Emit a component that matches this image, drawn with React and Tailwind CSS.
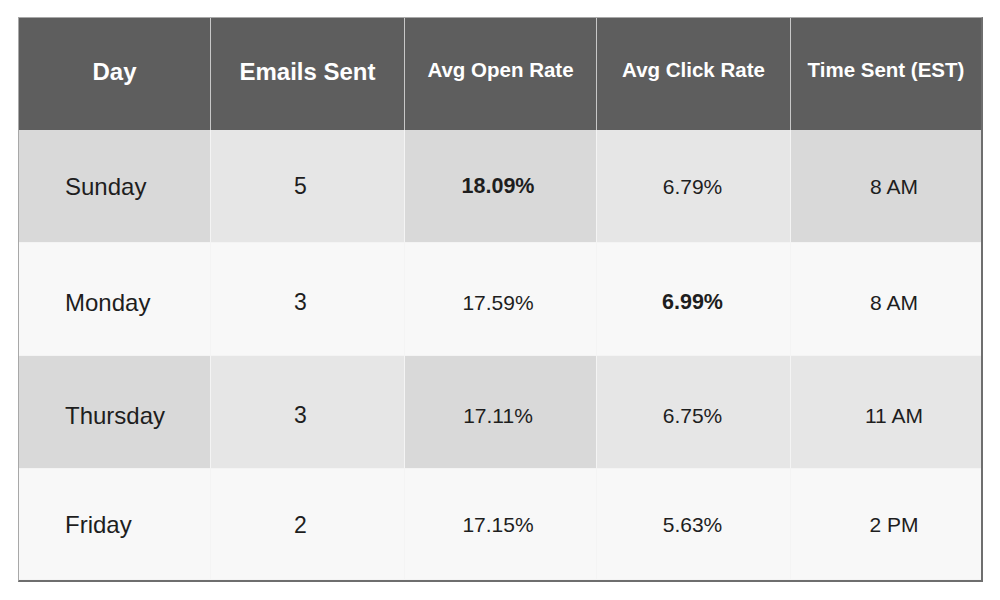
import React from "react";

const rows = [
  { day: "Sunday", sent: "5", open: "18.09%", click: "6.79%", time: "8 AM", bg: ["bg-[#d9d9d9]", "bg-[#e6e6e6]", "bg-[#d9d9d9]", "bg-[#e6e6e6]", "bg-[#d9d9d9]"], boldOpen: true, h: "h-[113px]", pt: "pt-[1px]" },
  { day: "Monday", sent: "3", open: "17.59%", click: "6.99%", time: "8 AM", bg: ["bg-[#f8f8f8]", "bg-[#f8f8f8]", "bg-[#f8f8f8]", "bg-[#f8f8f8]", "bg-[#f8f8f8]"], boldClick: true, h: "h-[113px]", pt: "pt-[7px]" },
  { day: "Thursday", sent: "3", open: "17.11%", click: "6.75%", time: "11 AM", bg: ["bg-[#d9d9d9]", "bg-[#e6e6e6]", "bg-[#d9d9d9]", "bg-[#e6e6e6]", "bg-[#e6e6e6]"], h: "h-[113px]", pt: "pt-[7px]" },
  { day: "Friday", sent: "2", open: "17.15%", click: "5.63%", time: "2 PM", bg: ["bg-[#f8f8f8]", "bg-[#f8f8f8]", "bg-[#f8f8f8]", "bg-[#f8f8f8]", "bg-[#f8f8f8]"], h: "h-[111px]", pt: "pt-[2px]" },
];

export default function App() {
  return (
    <div className="w-[1000px] h-[600px] bg-white pt-[17px] pl-[18px]" style={{ fontFamily: '"Liberation Sans", Arial, sans-serif' }}>
      <div className="w-[965px] border-t border-l border-[#a8a8a8] border-r-2 border-b-2 border-r-[#6e6e6e] border-b-[#6e6e6e]">
        <div className="grid grid-cols-[192px_194px_192px_194px_190px] text-white font-bold bg-[#5e5e5e]">
          <div className="h-[112px] flex items-center justify-center pb-[5px] border-r border-[#c8c8c8] text-[24px]">Day</div>
          <div className="h-[112px] flex items-center justify-center pb-[5px] border-r border-[#c8c8c8] text-[24px]">Emails Sent</div>
          <div className="h-[112px] flex items-center justify-center pb-[8px] border-r border-[#c8c8c8] text-[20.5px]">Avg Open Rate</div>
          <div className="h-[112px] flex items-center justify-center pb-[8px] border-r border-[#c8c8c8] text-[20.5px]">Avg Click Rate</div>
          <div className="h-[112px] flex items-center justify-center pb-[8px] text-[20.5px]">Time Sent (EST)</div>
        </div>
        {rows.map((r, i) => (
          <div key={i} className="grid grid-cols-[192px_194px_192px_194px_190px] text-[#1e1e1e]">
            <div className={`${r.h} ${r.bg[0]} ${r.pt} flex items-center pl-[46px] border-r border-b border-[#f4f4f4] text-[24px]`}>{r.day}</div>
            <div className={`${r.h} ${r.bg[1]} ${r.pt} flex items-center justify-center pr-[14px] border-r border-b border-[#f4f4f4] text-[23px]`}>{r.sent}</div>
            <div className={`${r.h} ${r.bg[2]} ${r.pt} flex items-center justify-center pr-[5px] border-r border-b border-[#f4f4f4] ${r.boldOpen ? "font-bold text-[21.5px]" : "text-[21px]"}`}>{r.open}</div>
            <div className={`${r.h} ${r.bg[3]} ${r.pt} flex items-center justify-center pr-[2px] border-r border-b border-[#f4f4f4] ${r.boldClick ? "font-bold text-[21.5px]" : "text-[21px]"}`}>{r.click}</div>
            <div className={`${r.h} ${r.bg[4]} ${r.pt} flex items-center justify-center pl-[16px] border-b border-[#f4f4f4] text-[21px]`}>{r.time}</div>
          </div>
        ))}
      </div>
    </div>
  );
}
